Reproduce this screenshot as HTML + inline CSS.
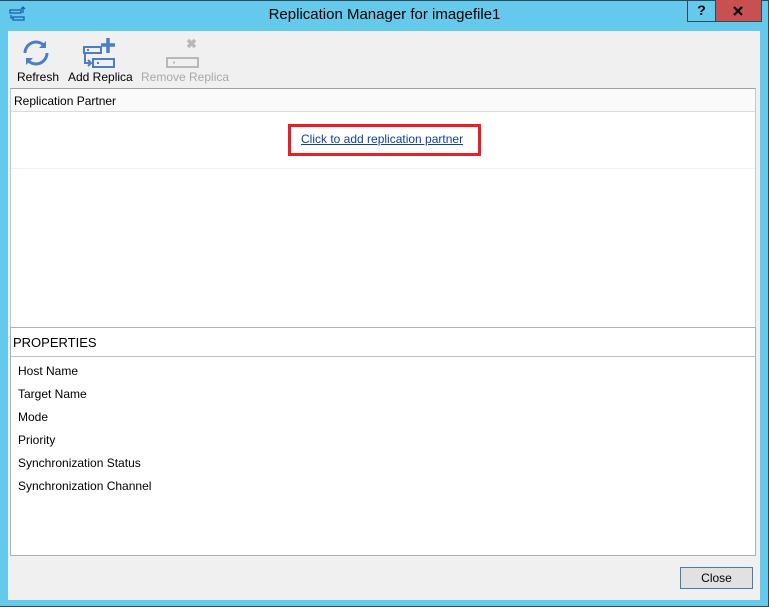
<!DOCTYPE html>
<html><head><meta charset="utf-8"><style>
*{margin:0;padding:0;box-sizing:border-box}
body{width:769px;height:607px;background:#64c9ea;position:relative;overflow:hidden;font-family:"Liberation Sans",sans-serif;font-size:12px;color:#000}
.abs{position:absolute}
</style></head><body>
<div class="abs" style="left:0;top:0;width:769px;height:1px;background:#2b4a5a"></div>
<div class="abs" style="left:768px;top:0;width:1px;height:607px;background:#2b4a5a"></div>
<div class="abs" style="left:0;top:606px;width:769px;height:1px;background:#2b4a5a"></div>
<svg class="abs" style="left:9px;top:6px" width="18" height="18" viewBox="0 0 18 18" fill="none" stroke="#1a5fb4" stroke-width="1.3">
<rect x="1" y="4" width="11" height="3"/><rect x="4" y="11" width="11" height="3"/><path d="M2 9v3h2M14 1v6M12 3l2-2 2 2"/></svg>
<div class="abs" style="left:0;top:6px;width:769px;text-align:center;font-size:15px;color:#000">Replication Manager for imagefile1</div>
<div class="abs" style="left:687px;top:0;width:29px;height:22px;border:1px solid #2b4a5a;border-top:none;text-align:center;font-weight:bold;font-size:14px;line-height:21px">?</div>
<div class="abs" style="left:715px;top:0;width:47px;height:22px;background:#c75050;border:1px solid #2b4a5a;border-top:none"></div>
<svg class="abs" style="left:733px;top:6px" width="10" height="10" viewBox="0 0 10 10" stroke="#000" stroke-width="2.2"><path d="M1 1l8 8M9 1l-8 8"/></svg>
<div class="abs" style="left:8px;top:31px;width:752px;height:569px;background:#f0f0f0"></div>
<svg class="abs" style="left:21px;top:38px" width="30" height="30" viewBox="0 0 30 30" fill="none" stroke="#4a7ec8" stroke-width="3">
<path d="M4 15a11 11 0 0 1 19-7.5"/><path d="M26 15a11 11 0 0 1-19 7.5"/>
<path d="M25 3v7h-7z" fill="#4a7ec8" stroke="none"/><path d="M5 27v-7h7z" fill="#4a7ec8" stroke="none"/></svg>
<div class="abs" style="left:17px;top:70px">Refresh</div>
<svg class="abs" style="left:82px;top:37px" width="34" height="32" viewBox="0 0 34 32" fill="none" stroke="#4a7ec8" stroke-width="2">
<rect x="2" y="10" width="17" height="6"/><rect x="11" y="22" width="21" height="8"/><path d="M26 1v15M19 8h14" stroke-width="3.5"/><path d="M3 17v9h5M6 23l3 3-3 3"/><path d="M5 13h2M15 26h2"/></svg>
<div class="abs" style="left:68px;top:70px">Add Replica</div>
<svg class="abs" style="left:165px;top:37px" width="34" height="32" viewBox="0 0 34 32" fill="none" stroke="#b8b8b8" stroke-width="2">
<rect x="2" y="21" width="31" height="9"/><path d="M23 3l7 7M30 3l-7 7" stroke-width="3.5"/><path d="M8 25.5h2"/></svg>
<div class="abs" style="left:141px;top:70px;color:#a8a8a8">Remove Replica</div>
<div class="abs" style="left:10px;top:88px;width:746px;height:240px;background:#fff;border:1px solid #c8c8c8;border-top:1px solid #a0a0a0"></div>
<div class="abs" style="left:11px;top:89px;width:744px;height:23px;background:#fafafa;border-bottom:1px solid #dcdcdc;padding:5px 3px">Replication Partner</div>
<div class="abs" style="left:11px;top:168px;width:744px;height:1px;background:#f0f0f0"></div>
<div class="abs" style="left:288px;top:124px;width:193px;height:32px;border:3px solid #ee1c25"></div>
<div class="abs" style="left:301px;top:132px;color:#0c3ea8;text-decoration:underline">Click to add replication partner</div>
<div class="abs" style="left:10px;top:327px;width:746px;height:229px;background:#fff;border:1px solid #b0b0b0"></div>
<div class="abs" style="left:13px;top:335px;font-size:13px">PROPERTIES</div>
<div class="abs" style="left:11px;top:356px;width:744px;height:1px;background:#c0c0c0"></div>
<div class="abs" style="left:18px;top:364px">Host Name</div>
<div class="abs" style="left:18px;top:387px">Target Name</div>
<div class="abs" style="left:18px;top:410px">Mode</div>
<div class="abs" style="left:18px;top:433px">Priority</div>
<div class="abs" style="left:18px;top:456px">Synchronization Status</div>
<div class="abs" style="left:18px;top:479px">Synchronization Channel</div>
<div class="abs" style="left:680px;top:567px;width:73px;height:22px;background:#e1e1e1;border:1px solid #3c7fb1;text-align:center;line-height:20px">Close</div>
</body></html>
